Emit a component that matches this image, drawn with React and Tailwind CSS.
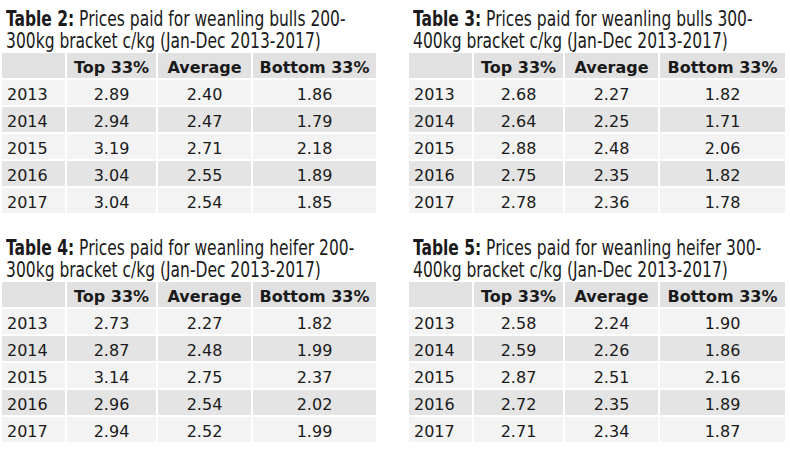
const tables = [
  {
    label: 'Table 2:',
    title: ' Prices paid for weanling bulls 200-',
    title2: '300kg bracket c/kg (Jan-Dec 2013-2017)',
    rows: [
      ['2013', '2.89', '2.40', '1.86'],
      ['2014', '2.94', '2.47', '1.79'],
      ['2015', '3.19', '2.71', '2.18'],
      ['2016', '3.04', '2.55', '1.89'],
      ['2017', '3.04', '2.54', '1.85'],
    ],
  },
  {
    label: 'Table 3:',
    title: ' Prices paid for weanling bulls 300-',
    title2: '400kg bracket c/kg (Jan-Dec 2013-2017)',
    rows: [
      ['2013', '2.68', '2.27', '1.82'],
      ['2014', '2.64', '2.25', '1.71'],
      ['2015', '2.88', '2.48', '2.06'],
      ['2016', '2.75', '2.35', '1.82'],
      ['2017', '2.78', '2.36', '1.78'],
    ],
  },
  {
    label: 'Table 4:',
    title: ' Prices paid for weanling heifer 200-',
    title2: '300kg bracket c/kg (Jan-Dec 2013-2017)',
    rows: [
      ['2013', '2.73', '2.27', '1.82'],
      ['2014', '2.87', '2.48', '1.99'],
      ['2015', '3.14', '2.75', '2.37'],
      ['2016', '2.96', '2.54', '2.02'],
      ['2017', '2.94', '2.52', '1.99'],
    ],
  },
  {
    label: 'Table 5:',
    title: ' Prices paid for weanling heifer 300-',
    title2: '400kg bracket c/kg (Jan-Dec 2013-2017)',
    rows: [
      ['2013', '2.58', '2.24', '1.90'],
      ['2014', '2.59', '2.26', '1.86'],
      ['2015', '2.87', '2.51', '2.16'],
      ['2016', '2.72', '2.35', '1.89'],
      ['2017', '2.71', '2.34', '1.87'],
    ],
  },
];

function PriceTable({ t }) {
  const head = 'h-[25px] pt-[4px] bg-[#e1e1e1] flex items-center justify-center font-bold';
  return (
    <div>
      <div className="pl-[5px] text-[21px] leading-[22px] text-[#1a1a1a] whitespace-nowrap origin-left scale-x-[0.82] font-['DejaVu_Sans_Condensed','Liberation_Sans_Narrow',sans-serif]">
        <div>
          <span className="font-bold">{t.label}</span>
          {t.title}
        </div>
        <div>{t.title2}</div>
      </div>
      <div className="mt-[1px] grid grid-cols-[63px_89px_93px_1fr] gap-[2px] text-[16px] text-[#1a1a1a] font-['DejaVu_Sans','Lato',sans-serif]">
        <div className="h-[25px] bg-[#e1e1e1]"></div>
        <div className={head}>Top 33%</div>
        <div className={head}>Average</div>
        <div className={head}>Bottom 33%</div>
        {t.rows.map((r, i) => {
          const bg = i % 2 === 0 ? 'bg-[#f3f3f3]' : 'bg-[#e4e4e4]';
          return (
            <div key={r[0]} className="contents">
              <div className={`h-[25px] pt-[4px] ${bg} flex items-center pl-[5px]`}>{r[0]}</div>
              <div className={`h-[25px] pt-[4px] ${bg} flex items-center justify-center`}>{r[1]}</div>
              <div className={`h-[25px] pt-[4px] ${bg} flex items-center justify-center`}>{r[2]}</div>
              <div className={`h-[25px] pt-[4px] ${bg} flex items-center justify-center`}>{r[3]}</div>
            </div>
          );
        })}
      </div>
    </div>
  );
}

export default function App() {
  return (
    <div className="w-[790px] h-[451px] bg-white pl-[2px] pt-[8px]">
      <div className="grid grid-cols-[374px_376px] gap-x-[33px] gap-y-[24px]">
        {tables.map((t) => (
          <PriceTable key={t.label} t={t} />
        ))}
      </div>
    </div>
  );
}
